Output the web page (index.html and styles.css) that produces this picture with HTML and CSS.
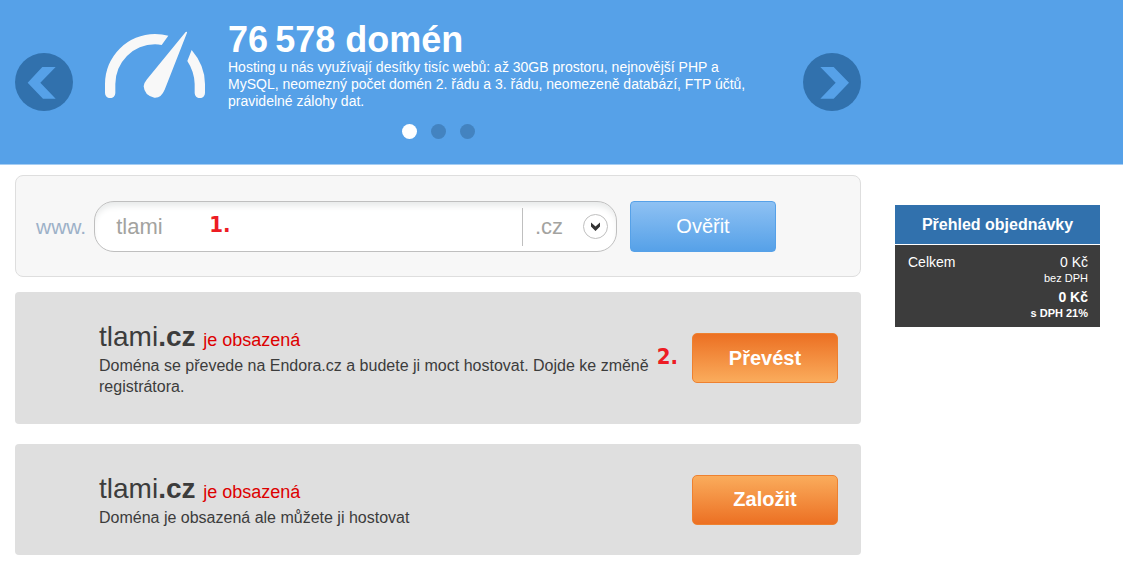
FILE: index.html
```html
<!DOCTYPE html>
<html lang="cs">
  <head>
    <meta charset="UTF-8" />
    <meta name="viewport" content="width=device-width, initial-scale=1.0" />
    <title>Objednávka domény</title>
    <link rel="stylesheet" href="styles.css">
  </head>
  <body>
    <header class="hero">
      <div class="slider">
        <button class="arrow" type="button" aria-label="Předchozí">
          <svg viewBox="0 0 174 174">
            <path d="M38 89 82 42H122L76 89 122 137H84Z" />
          </svg>
        </button>
        <div class="slide">
          <div class="slide-content">
            <svg class="gauge" viewBox="0 0 300 201">
              <path d="M0 186V159A150 150 0 0 1 150 9Q172 9 190 14L170 42Q160 40 150 40A119 119 0 0 0 31 159V186A15 15 0 0 1 0 186Z" />
              <path d="M260 57Q300 104 300 159V186A15 15 0 0 1 269 186V159Q268 122 247 90Z" />
              <path d="M242 3Q247 0 246 5L179 176Q168 202 148 200Q118 194 116 166Q118 154 126 145Z" />
            </svg>
            <div class="slide-text">
              <h1>76&thinsp;578 domén</h1>
              <p>Hosting u nás využívají desítky tisíc webů: až 30GB prostoru, nejnovější PHP a MySQL, neomezný počet domén 2. řádu a 3. řádu, neomezeně databází, FTP účtů, pravidelné zálohy dat.</p>
            </div>
          </div>
          <div class="dots">
            <button class="dot active" type="button" aria-label="Snímek 1"></button>
            <button class="dot" type="button" aria-label="Snímek 2"></button>
            <button class="dot" type="button" aria-label="Snímek 3"></button>
          </div>
        </div>
        <button class="arrow" type="button" aria-label="Další">
          <svg viewBox="0 0 174 174">
            <path d="M138 89 92 42H52L98 89 52 137H92Z" />
          </svg>
        </button>
      </div>
    </header>

    <div class="page">
      <main>
        <form class="search">
          <label for="domain">www.</label>
          <div class="field">
            <input type="text" id="domain" value="tlami" />
            <span class="step step-one">1.</span>
            <div class="tld">
              <select id="tld" aria-label="Koncovka domény">
                <option>.cz</option>
                <option>.eu</option>
                <option>.com</option>
              </select>
              <svg class="toggle" viewBox="0 0 25 25">
                <circle cx="12.5" cy="12.5" r="12" />
                <path d="M8 8.500 12.500 12.500 17 8.500V12.500L12.500 17 8 12.500Z" />
              </svg>
            </div>
          </div>
          <button class="btn btn-blue" type="button">Ověřit</button>
        </form>

        <section class="result">
          <div class="result-text">
            <h2>tlami<b>.cz</b> <span class="taken">je obsazená</span></h2>
            <p>Doména se převede na Endora.cz a budete ji moct hostovat. Dojde ke změně registrátora.</p>
          </div>
          <div class="action">
            <span class="step step-two">2.</span>
            <button class="btn btn-transfer" type="button">Převést</button>
          </div>
        </section>

        <section class="result">
          <div class="result-text">
            <h2>tlami<b>.cz</b> <span class="taken">je obsazená</span></h2>
            <p>Doména je obsazená ale můžete ji hostovat</p>
          </div>
          <div class="action">
            <button class="btn btn-create" type="button">Založit</button>
          </div>
        </section>
      </main>

      <aside class="order">
        <h3>Přehled objednávky</h3>
        <div class="order-body">
          <span>Celkem</span>
          <div class="prices">
            <p>0 Kč</p>
            <p class="small">bez DPH</p>
            <p class="total">0 Kč</p>
            <p class="small"><b>s DPH 21%</b></p>
          </div>
        </div>
      </aside>
    </div>
  </body>
</html>
```

FILE: styles.css
```css
* {
  padding: 0;
  margin: 0;
  box-sizing: border-box;
}
body {
  background-color: white;
  color: #3c3c3c;
  font-family: "Liberation Sans", Arial, sans-serif;
  font-size: 16px;
}
button,
input,
select {
  font-family: inherit;
}
button {
  border: none;
  cursor: pointer;
}

/* Slider */
.hero {
  padding: 0 262px 0 15px;
  background-color: #56a1e8;
  border-bottom: 1px solid #a5cdf3;
}
.slider {
  display: flex;
  align-items: center;
  min-height: 164px;
}
.arrow {
  flex: none;
  width: 58px;
  height: 58px;
  border-radius: 50%;
  background-color: #3171ad;
}
.arrow svg {
  display: block;
  width: 58px;
  height: 58px;
  fill: #56a1e8;
}
.slide {
  flex: 1;
}
.slide-content {
  display: flex;
  gap: 23px;
  padding: 0 40px 0 32px;
}
.gauge {
  flex: none;
  width: 100px;
  height: 67px;
  margin-top: 10px;
  fill: #f8f8f8;
}
.slide-text {
  color: white;
}
.slide-text h1 {
  font-size: 36px;
  line-height: 38px;
}
.slide-text p {
  font-size: 14px;
  line-height: 17px;
}
.dots {
  display: flex;
  justify-content: center;
  gap: 14px;
  padding: 14px 0 4px;
}
.dot {
  width: 15px;
  height: 15px;
  border-radius: 50%;
  background-color: #4383c0;
}
.dot.active {
  background-color: white;
}

/* Page columns */
.page {
  display: flex;
  align-items: flex-start;
  gap: 34px;
  padding: 10px 23px 20px 15px;
}
main {
  flex: 1;
}

/* Domain search */
.search {
  display: flex;
  align-items: center;
  padding: 25px 84px 24px 20px;
  margin-bottom: 15px;
  border: 1px solid #dedede;
  border-radius: 8px;
  background-color: #f7f7f7;
}
.search label {
  margin-right: 8px;
  color: #9db1c8;
  font-size: 21px;
}
.field {
  position: relative;
  display: flex;
  flex: 1;
  align-items: center;
  height: 51px;
  margin-right: 13px;
  border: 1px solid #bfbfbf;
  border-radius: 20px;
  background-color: white;
  box-shadow: inset 0 6px 6px -2px #e8eaea;
}
.field input {
  flex: 1;
  min-width: 0;
  padding-left: 21px;
  border: none;
  outline: none;
  background: none;
  color: #a3a3a0;
  font-size: 22px;
}
.tld {
  position: relative;
  width: 94px;
  border-left: 1px solid #bfbfbf;
}
.tld select {
  width: 100%;
  height: 38px;
  padding-left: 12px;
  border: none;
  outline: none;
  appearance: none;
  background: none;
  color: #a3a3a0;
  font-size: 22px;
}
.toggle {
  position: absolute;
  top: 6px;
  right: 8px;
  width: 25px;
  height: 25px;
  pointer-events: none;
}
.toggle circle {
  fill: white;
  stroke: #bfbfbf;
}
.toggle path {
  fill: #333333;
}

/* Buttons */
.btn {
  width: 146px;
  height: 50px;
  border-radius: 5px;
  color: white;
  font-size: 20px;
  font-weight: bold;
}
.btn-blue {
  height: 51px;
  border: 1px solid #56a1e8;
  border-radius: 4px;
  background: linear-gradient(#8ec1f3, #56a1e8);
  font-weight: normal;
}
.btn-transfer {
  border: 1px solid #ee8130;
  background: linear-gradient(#ec7023, #faac5c);
}
.btn-create {
  border: 1px solid #ee8130;
  background: linear-gradient(#faac5c, #ec7023);
}

/* Results */
.result {
  display: flex;
  align-items: center;
  justify-content: space-between;
  gap: 20px;
  padding: 27px 23px 27px 84px;
  margin-bottom: 20px;
  border-radius: 4px;
  background-color: #dfdfdf;
}
.result h2 {
  font-size: 28px;
  font-weight: normal;
  line-height: 36px;
}
.result p {
  line-height: 21px;
}
.taken {
  color: #dd0000;
  font-size: 18px;
  line-height: 20px;
}
.action {
  position: relative;
}

/* Step marks */
.step {
  position: absolute;
  color: #ed1c24;
  font-family: "DejaVu Sans Condensed", "DejaVu Sans", sans-serif;
  font-size: 22px;
  font-weight: bold;
  line-height: 24px;
}
.step-one {
  top: 11px;
  left: 114px;
}
.step-two {
  top: 12px;
  right: 160px;
}

/* Order summary */
.order {
  width: 205px;
  margin-top: 30px;
  color: white;
}
.order h3 {
  margin-bottom: 1px;
  background-color: #3171ad;
  font-size: 16px;
  line-height: 39px;
  text-align: center;
}
.order-body {
  display: flex;
  justify-content: space-between;
  padding: 9px 12px 7px 13px;
  background-color: #3c3c3c;
  font-size: 14px;
  line-height: 17px;
}
.prices {
  text-align: right;
}
.prices .small {
  font-size: 11px;
  line-height: 14px;
}
.prices .total {
  margin-top: 4px;
  font-weight: bold;
}
```
